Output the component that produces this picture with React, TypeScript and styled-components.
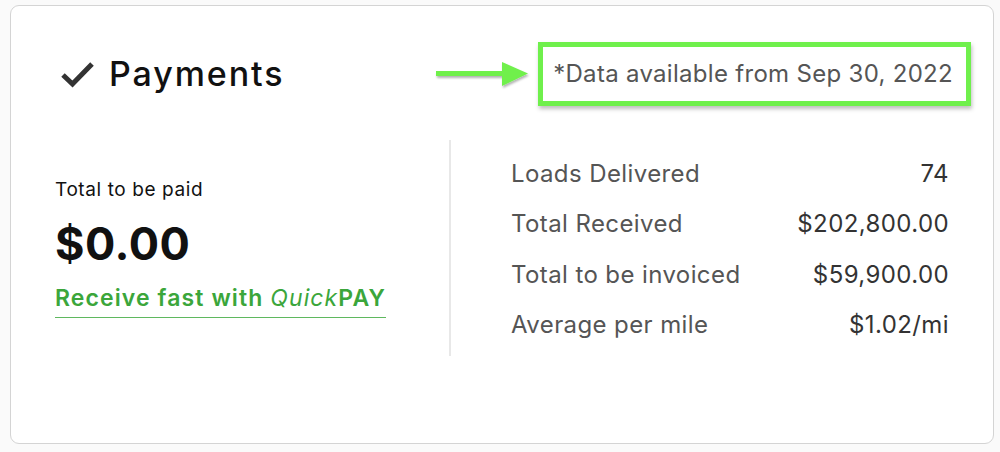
import React from "react";
import styled, { createGlobalStyle } from "styled-components";

const GlobalStyle = createGlobalStyle`
  html, body {
    margin: 0;
    padding: 0;
    background: #fafafa;
    font-family: Inter, "Noto Sans", sans-serif;
  }
`;

const Page = styled.div`
  width: 1000px;
  height: 452px;
  padding: 5px 6px 8px 10px;
  box-sizing: border-box;
`;

const Card = styled.section`
  height: 100%;
  box-sizing: border-box;
  background: #fff;
  border: 1px solid #d4d4d4;
  border-radius: 9px;
  padding: 34px 44px 0 44px;
  display: flex;
  flex-direction: column;
`;

const Header = styled.div`
  display: flex;
  align-items: center;
  justify-content: space-between;
  height: 68px;
`;

const Title = styled.h2`
  margin: 0;
  display: flex;
  align-items: center;
  gap: 13px;
  font-size: 34px;
  line-height: 40px;
  font-weight: 500;
  color: #111;
  letter-spacing: 1.9px;
  padding-left: 5px;
`;

const Callout = styled.div`
  display: flex;
  align-items: center;
  gap: 6px;
  margin-right: -22px;
`;

const Highlight = styled.div`
  border: 5px solid #6ff04c;
  box-shadow: 1px 3px 4px rgba(0, 0, 0, 0.25);
  padding: 13px 13px 13px 10px;
  font-size: 24px;
  line-height: 28px;
  color: #555;
  letter-spacing: 0.3px;
`;

const Body = styled.div`
  display: flex;
  margin-top: 32px;
`;

const PaidColumn = styled.div`
  width: 394px;
  display: flex;
  flex-direction: column;
  padding-top: 38px;
`;

const Label = styled.div`
  font-size: 19px;
  line-height: 23px;
  color: #111;
  letter-spacing: 0.6px;
`;

const Amount = styled.div`
  font-size: 45px;
  line-height: 54px;
  font-weight: 700;
  color: #111;
  margin-top: 16px;
  letter-spacing: 0.5px;
`;

const QuickLink = styled.a`
  align-self: flex-start;
  margin-top: 14px;
  font-size: 23px;
  line-height: 27px;
  font-weight: 600;
  color: #3ba63b;
  text-decoration: none;
  letter-spacing: 1.1px;
  border-bottom: 1px solid #5fb85f;
  padding-bottom: 5px;
  em {
    font-weight: 400;
  }
`;

const Divider = styled.div`
  width: 2px;
  height: 216px;
  background: #e8e8e8;
`;

const Stats = styled.div`
  flex: 1;
  padding: 8px 0 0 60px;
  display: flex;
  flex-direction: column;
`;

const StatRow = styled.div`
  display: flex;
  justify-content: space-between;
  align-items: center;
  height: 50.5px;
  font-size: 24px;
  letter-spacing: 0.4px;
`;

const StatName = styled.span`
  color: #555;
`;

const StatValue = styled.span`
  color: #333;
`;

const Check = () => (
  <svg width="36" height="28" viewBox="0 0 36 28">
    <path d="M3 15 L12.5 24 L32 4" fill="none" stroke="#333" strokeWidth="5" />
  </svg>
);

const Arrow = () => (
  <svg width="96" height="36" viewBox="0 0 96 36" style={{ overflow: "visible" }}>
    <defs>
      <filter id="sh" x="-10%" y="-30%" width="130%" height="170%">
        <feDropShadow dx="1" dy="2" stdDeviation="1.2" floodOpacity="0.3" />
      </filter>
    </defs>
    <g filter="url(#sh)" fill="#6ff04c">
      <rect x="0" y="15" width="70" height="5" />
      <polygon points="66,6 92,17.5 66,30" />
    </g>
  </svg>
);

const stats = [
  ["Loads Delivered", "74"],
  ["Total Received", "$202,800.00"],
  ["Total to be invoiced", "$59,900.00"],
  ["Average per mile", "$1.02/mi"],
];

export default function App() {
  return (
    <Page>
      <GlobalStyle />
      <Card>
        <Header>
          <Title>
            <Check />
            Payments
          </Title>
          <Callout>
            <Arrow />
            <Highlight>*Data available from Sep 30, 2022</Highlight>
          </Callout>
        </Header>
        <Body>
          <PaidColumn>
            <Label>Total to be paid</Label>
            <Amount>$0.00</Amount>
            <QuickLink href="#">
              Receive fast with <em>Quick</em>PAY
            </QuickLink>
          </PaidColumn>
          <Divider />
          <Stats>
            {stats.map(([name, value]) => (
              <StatRow key={name}>
                <StatName>{name}</StatName>
                <StatValue>{value}</StatValue>
              </StatRow>
            ))}
          </Stats>
        </Body>
      </Card>
    </Page>
  );
}
